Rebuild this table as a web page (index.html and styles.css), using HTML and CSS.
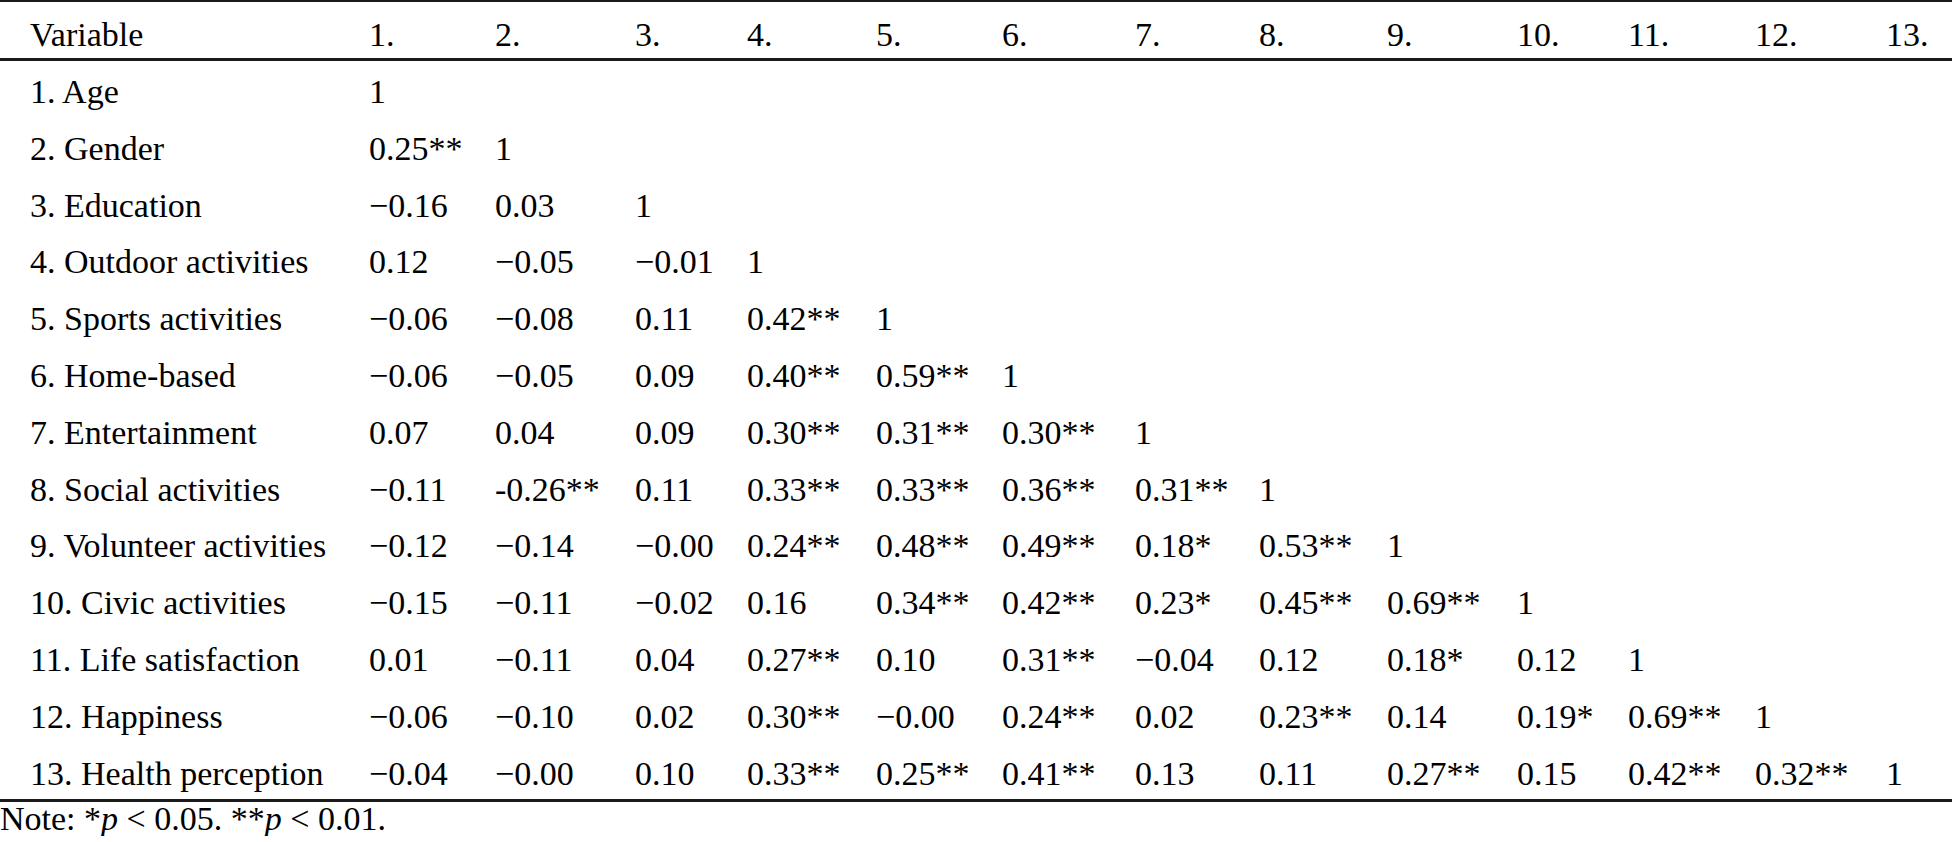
FILE: index.html
```html
<!DOCTYPE html>
<html lang="en">

<head>
  <meta charset="UTF-8">
  <meta name="viewport" content="width=device-width, initial-scale=1.0">
  <title>Correlation matrix</title>
  <link rel="stylesheet" href="styles.css">
</head>

<body>
  <table class="corr-table">
    <colgroup>
      <col class="c-var">
      <col class="c1"><col class="c2"><col class="c3"><col class="c4"><col class="c5">
      <col class="c6"><col class="c7"><col class="c8"><col class="c9"><col class="c10">
      <col class="c11"><col class="c12"><col class="c13">
    </colgroup>
    <thead>
      <tr>
        <th>Variable</th>
        <th>1.</th><th>2.</th><th>3.</th><th>4.</th><th>5.</th><th>6.</th><th>7.</th>
        <th>8.</th><th>9.</th><th>10.</th><th>11.</th><th>12.</th><th>13.</th>
      </tr>
    </thead>
    <tbody>
      <tr><td>1. Age</td><td>1</td><td></td><td></td><td></td><td></td><td></td><td></td><td></td><td></td><td></td><td></td><td></td><td></td></tr>
      <tr><td>2. Gender</td><td>0.25**</td><td>1</td><td></td><td></td><td></td><td></td><td></td><td></td><td></td><td></td><td></td><td></td><td></td></tr>
      <tr><td>3. Education</td><td>&minus;0.16</td><td>0.03</td><td>1</td><td></td><td></td><td></td><td></td><td></td><td></td><td></td><td></td><td></td><td></td></tr>
      <tr><td>4. Outdoor activities</td><td>0.12</td><td>&minus;0.05</td><td>&minus;0.01</td><td>1</td><td></td><td></td><td></td><td></td><td></td><td></td><td></td><td></td><td></td></tr>
      <tr><td>5. Sports activities</td><td>&minus;0.06</td><td>&minus;0.08</td><td>0.11</td><td>0.42**</td><td>1</td><td></td><td></td><td></td><td></td><td></td><td></td><td></td><td></td></tr>
      <tr><td>6. Home-based</td><td>&minus;0.06</td><td>&minus;0.05</td><td>0.09</td><td>0.40**</td><td>0.59**</td><td>1</td><td></td><td></td><td></td><td></td><td></td><td></td><td></td></tr>
      <tr><td>7. Entertainment</td><td>0.07</td><td>0.04</td><td>0.09</td><td>0.30**</td><td>0.31**</td><td>0.30**</td><td>1</td><td></td><td></td><td></td><td></td><td></td><td></td></tr>
      <tr><td>8. Social activities</td><td>&minus;0.11</td><td>-0.26**</td><td>0.11</td><td>0.33**</td><td>0.33**</td><td>0.36**</td><td>0.31**</td><td>1</td><td></td><td></td><td></td><td></td><td></td></tr>
      <tr><td>9. Volunteer activities</td><td>&minus;0.12</td><td>&minus;0.14</td><td>&minus;0.00</td><td>0.24**</td><td>0.48**</td><td>0.49**</td><td>0.18*</td><td>0.53**</td><td>1</td><td></td><td></td><td></td><td></td></tr>
      <tr><td>10. Civic activities</td><td>&minus;0.15</td><td>&minus;0.11</td><td>&minus;0.02</td><td>0.16</td><td>0.34**</td><td>0.42**</td><td>0.23*</td><td>0.45**</td><td>0.69**</td><td>1</td><td></td><td></td><td></td></tr>
      <tr><td>11. Life satisfaction</td><td>0.01</td><td>&minus;0.11</td><td>0.04</td><td>0.27**</td><td>0.10</td><td>0.31**</td><td>&minus;0.04</td><td>0.12</td><td>0.18*</td><td>0.12</td><td>1</td><td></td><td></td></tr>
      <tr><td>12. Happiness</td><td>&minus;0.06</td><td>&minus;0.10</td><td>0.02</td><td>0.30**</td><td>&minus;0.00</td><td>0.24**</td><td>0.02</td><td>0.23**</td><td>0.14</td><td>0.19*</td><td>0.69**</td><td>1</td><td></td></tr>
      <tr><td>13. Health perception</td><td>&minus;0.04</td><td>&minus;0.00</td><td>0.10</td><td>0.33**</td><td>0.25**</td><td>0.41**</td><td>0.13</td><td>0.11</td><td>0.27**</td><td>0.15</td><td>0.42**</td><td>0.32**</td><td>1</td></tr>
    </tbody>
  </table>
  <p class="note">Note: *<i>p</i> &lt; 0.05. **<i>p</i> &lt; 0.01.</p>
</body>

</html>
```

FILE: styles.css
```css
body {
  font-family: 'Liberation Serif', 'Times New Roman', serif;
  font-size: 34px;
  color: #000;
  background-color: #fff;
  margin: 0;
  padding: 0;
}

.corr-table {
  width: 1952px;
  table-layout: fixed;
  border-collapse: collapse;
  border-top: 2px solid #1a1a1a;
  border-bottom: 3px solid #1a1a1a;
}

/* column widths, first one holds the left padding */
.c-var { width: 369px; }
.c1 { width: 126px; }
.c2 { width: 140px; }
.c3 { width: 112px; }
.c4 { width: 129px; }
.c5 { width: 126px; }
.c6 { width: 133px; }
.c7 { width: 124px; }
.c8 { width: 128px; }
.c9 { width: 130px; }
.c10 { width: 111px; }
.c11 { width: 127px; }
.c12 { width: 131px; }
.c13 { width: 66px; }

.corr-table th,
.corr-table td {
  text-align: left;
  font-weight: normal;
  white-space: nowrap;
  padding: 0;
}

.corr-table thead tr {
  border-bottom: 3px solid #1a1a1a;
}

.corr-table th {
  padding-top: 9px;
  line-height: 47px;
}

.corr-table td {
  padding-top: 5px;
  line-height: 51.8px;
}

.corr-table th:first-child,
.corr-table td:first-child {
  padding-left: 30px;
}

.note {
  margin: 0;
  line-height: 34px;
}
```
